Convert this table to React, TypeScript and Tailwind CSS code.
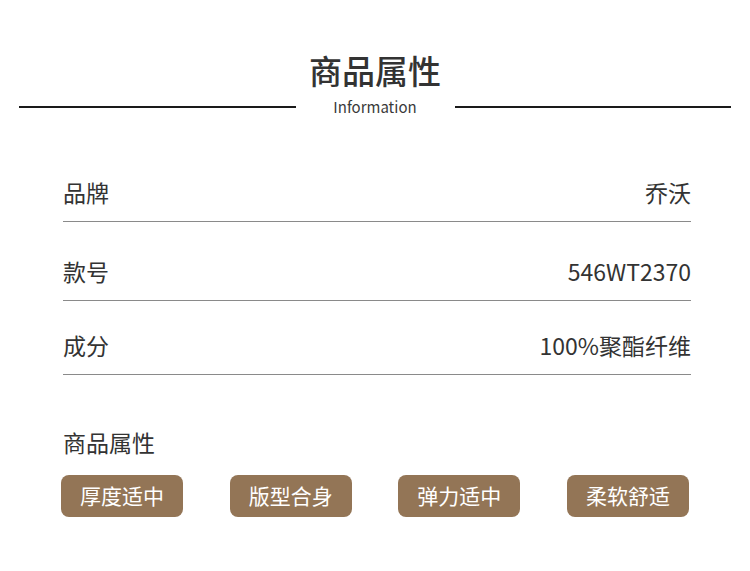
const rows = [
  { label: "品牌", value: "乔沃", h: "h-[79px]" },
  { label: "款号", value: "546WT2370", h: "h-[79px]" },
  { label: "成分", value: "100%聚酯纤维", h: "h-[74px]" },
];

const tags = ["厚度适中", "版型合身", "弹力适中", "柔软舒适"];

export default function App() {
  return (
    <div
      className="w-[750px] h-[571px] bg-white text-[#333333] overflow-hidden"
      style={{ fontFamily: '"Noto Sans CJK SC", "Noto Sans", sans-serif' }}
    >
      <header className="pt-[50px]">
        <h1 className="text-center text-[33px] leading-[40px] font-medium text-[#333333]">
          商品属性
        </h1>
        <div className="mt-[7px] flex items-center px-[19px]">
          <div className="h-[2px] flex-1 bg-[#1a1a1a]" />
          <span className="w-[159px] text-center text-[15px] leading-[20px] text-[#3a3a3a]">
            Information
          </span>
          <div className="h-[2px] flex-1 bg-[#1a1a1a]" />
        </div>
      </header>

      <section className="ml-[63px] w-[628px] mt-[26px]">
        {rows.map((r) => (
          <div
            key={r.label}
            className={`${r.h} flex items-end justify-between border-b border-[#8a8a8a] pb-[16px] text-[23px] leading-[26px]`}
          >
            <span>{r.label}</span>
            <span>{r.value}</span>
          </div>
        ))}

        <h2 className="mt-[54px] text-[23px] leading-[26px]">商品属性</h2>

        <div className="-ml-[2px] mt-[20px] flex w-[628px] justify-between">
          {tags.map((t) => (
            <div
              key={t}
              className="flex h-[42px] w-[122px] items-center justify-center rounded-[8px] bg-[#937556] text-[21px] text-white"
            >
              {t}
            </div>
          ))}
        </div>
      </section>
    </div>
  );
}
